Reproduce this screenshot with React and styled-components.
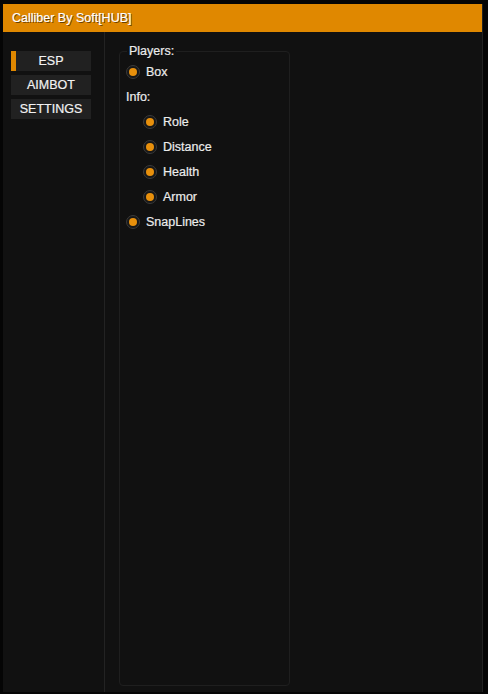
import React, { useState } from "react"
import styled, { createGlobalStyle } from "styled-components"

const GlobalStyle = createGlobalStyle`
  html, body {
    margin: 0;
    padding: 0;
    background: #050505;
  }
  body {
    font-family: "Liberation Sans", Arial, sans-serif;
    font-size: 12px;
    color: #ececec;
    -webkit-text-stroke: 0.2px currentColor;
  }
`

const Window = styled.div`
  margin: 4px 0 0 3px;
  width: 480px;
  height: 688px;
  display: flex;
  flex-direction: column;
  background: #111111;
  border-right: 1px solid #222222;
  box-sizing: border-box;
`

const TitleBar = styled.div`
  height: 28px;
  flex-shrink: 0;
  display: flex;
  align-items: center;
  padding-left: 9px;
  background: #e08800;
  color: #ffffff;
  font-size: 12.5px;
  text-shadow: 1px 1px 0 rgba(0, 0, 0, 0.55);
`

const Body = styled.div`
  flex: 1;
  display: flex;
  min-height: 0;
`

const Sidebar = styled.nav`
  width: 102px;
  flex-shrink: 0;
  border-right: 1px solid #232323;
  padding: 19px 0 0 8px;
  box-sizing: border-box;
  display: flex;
  flex-direction: column;
  gap: 4px;
`

const Tab = styled.button`
  position: relative;
  width: 80px;
  height: 20px;
  border: none;
  padding: 0;
  background: #212121;
  color: #f2f2f2;
  font-family: inherit;
  font-size: 12.5px;
  cursor: pointer;

  &::before {
    content: "";
    position: absolute;
    left: 0;
    top: 0;
    bottom: 0;
    width: ${(p) => (p.$active ? "5px" : "0")};
    background: #e08800;
  }
`

const Content = styled.div`
  flex: 1;
  padding: 12px 0 6px 14px;
  display: flex;
`

const Group = styled.fieldset`
  margin: 0;
  width: 171px;
  box-sizing: border-box;
  border: 1px solid #1f1f1f;
  border-radius: 4px;
  padding: 1px 0 0 6px;
  display: flex;
  flex-direction: column;
`

const Legend = styled.legend`
  padding: 0 2px;
  margin-left: 1px;
  font-size: 12.5px;
`

const Row = styled.label`
  display: flex;
  align-items: center;
  gap: 6px;
  height: 25px;
  padding-left: ${(p) => (p.$indent ? "17px" : "0")};
  cursor: pointer;
  font-size: 12.5px;
`

const SectionLabel = styled.div`
  height: 25px;
  display: flex;
  align-items: center;
  font-size: 12.5px;
`

const Radio = styled.span`
  width: 14px;
  height: 14px;
  border-radius: 50%;
  box-sizing: border-box;
  border: 1px solid #3a3a3a;
  background: #181818;
  display: flex;
  align-items: center;
  justify-content: center;

  &::after {
    content: "";
    width: 8px;
    height: 8px;
    border-radius: 50%;
    background: ${(p) => (p.$on ? "#e8900c" : "transparent")};
  }
`

const tabs = ["ESP", "AIMBOT", "SETTINGS"]

export default function App() {
  const [active, setActive] = useState("ESP")
  const [opts, setOpts] = useState({
    Box: true,
    Role: true,
    Distance: true,
    Health: true,
    Armor: true,
    SnapLines: true,
  })

  const toggle = (k) => setOpts((o) => ({ ...o, [k]: !o[k] }))

  const option = (k, indent) => (
    <Row key={k} $indent={indent} onClick={() => toggle(k)}>
      <Radio $on={opts[k]} />
      {k}
    </Row>
  )

  return (
    <>
      <GlobalStyle />
      <Window>
        <TitleBar>Calliber By Soft[HUB]</TitleBar>
        <Body>
          <Sidebar>
            {tabs.map((t) => (
              <Tab key={t} $active={active === t} onClick={() => setActive(t)}>
                {t}
              </Tab>
            ))}
          </Sidebar>
          <Content>
            <Group>
              <Legend>Players:</Legend>
              {option("Box")}
              <SectionLabel>Info:</SectionLabel>
              {["Role", "Distance", "Health", "Armor"].map((k) => option(k, true))}
              {option("SnapLines")}
            </Group>
          </Content>
        </Body>
      </Window>
    </>
  )
}
